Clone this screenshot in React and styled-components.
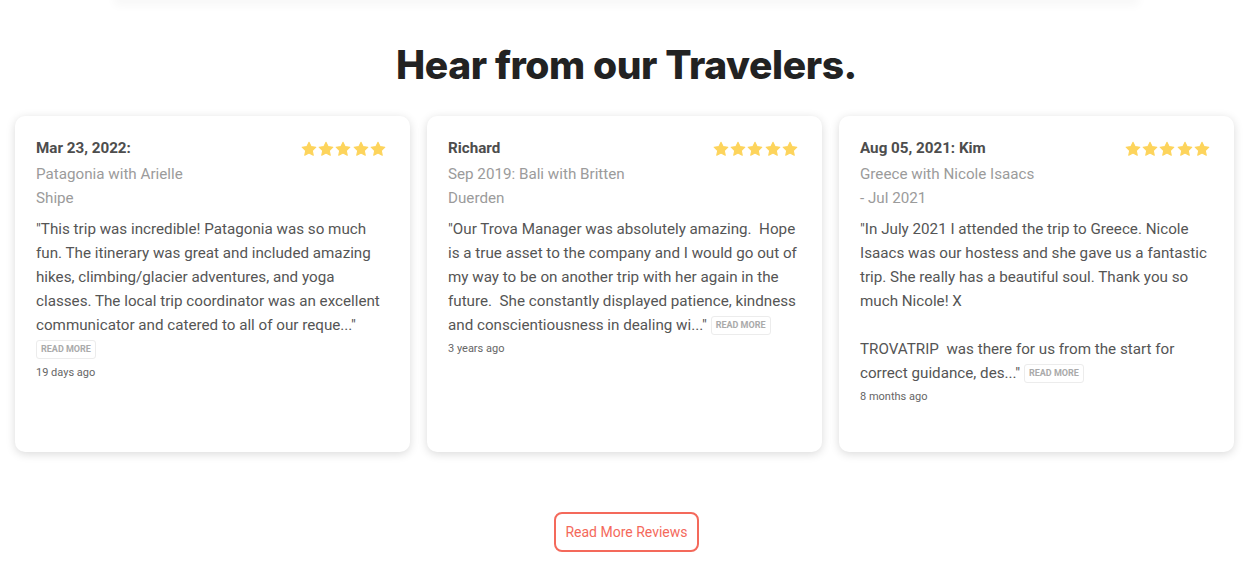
import styled, { createGlobalStyle } from "styled-components";

const GlobalStyle = createGlobalStyle`
  body {
    margin: 0;
    background: #fff;
    font-family: Roboto, "Liberation Sans", sans-serif;
  }
`;

const reviews = [
  {
    title: "Mar 23, 2022:",
    trip: "Patagonia with Arielle Shipe",
    text: "\"This trip was incredible! Patagonia was so much fun. The itinerary was great and included amazing hikes, climbing/glacier adventures, and yoga classes. The local trip coordinator was an excellent communicator and catered to all of our reque...\"",
    ago: "19 days ago",
  },
  {
    title: "Richard",
    trip: "Sep 2019: Bali with Britten Duerden",
    text: "\"Our Trova Manager was absolutely amazing.\u00a0 Hope is a true asset to the company and I would go out of my way to be on another trip with her again in the future.\u00a0 She constantly displayed patience, kindness and conscientiousness in dealing wi...\"",
    ago: "3 years ago",
  },
  {
    title: "Aug 05, 2021: Kim",
    trip: "Greece with Nicole Isaacs - Jul 2021",
    text: "\"In July 2021 I attended the trip to Greece. Nicole Isaacs was our hostess and she gave us a fantastic trip. She really has a beautiful soul. Thank you so much Nicole! X\n\nTROVATRIP\u00a0 was there for us from the start for correct guidance, des...\"",
    ago: "8 months ago",
  },
];

const Star = () => (
  <svg width="16" height="16" viewBox="0 0 24 24">
    <path
      d="M12 1.8l3.1 6.6 7.2.9-5.3 5 1.4 7.1L12 17.9l-6.4 3.5 1.4-7.1-5.3-5 7.2-.9z"
      fill="#fdd45c"
      stroke="#fdd45c"
      strokeWidth="1.6"
      strokeLinejoin="round"
    />
  </svg>
);

const App = () => (
  <>
    <GlobalStyle />
    <Section>
      <TopShade />
      <Heading>Hear from our Travelers.</Heading>
      <Grid>
        {reviews.map((r) => (
          <Card key={r.title}>
            <CardHead>
              <Who>
                <Name>{r.title}</Name>
                <Trip>{r.trip}</Trip>
              </Who>
              <Stars>
                {[0, 1, 2, 3, 4].map((i) => (
                  <Star key={i} />
                ))}
              </Stars>
            </CardHead>
            <Body>
              {r.text} <ReadMore>Read more</ReadMore>
            </Body>
            <Ago>{r.ago}</Ago>
          </Card>
        ))}
      </Grid>
      <Footer>
        <MoreButton>Read More Reviews</MoreButton>
      </Footer>
    </Section>
  </>
);

const Section = styled.section`
  min-height: 568px;
`;

const TopShade = styled.div`
  height: 2px;
  margin: -2px 120px 0;
  background: #f8f8f8;
  box-shadow: 0 0 10px 6px #f8f8f8;
`;

const Heading = styled.h2`
  margin: 40px 0 0;
  height: 50px;
  text-align: center;
  font-family: Inter, "Noto Sans", sans-serif;
  font-weight: 800;
  font-size: 39px;
  line-height: 50px;
  letter-spacing: -0.4px;
  color: #222;
`;

const Grid = styled.div`
  display: grid;
  grid-template-columns: repeat(3, 395px);
  gap: 17px;
  padding-left: 15px;
  margin-top: 26px;
`;

const Card = styled.article`
  box-sizing: border-box;
  height: 336px;
  padding: 20px 18px 20px 21px;
  background: #fff;
  border-radius: 10px;
  box-shadow: 0 2px 10px rgba(0, 0, 0, 0.15);
`;

const CardHead = styled.div`
  display: flex;
  justify-content: space-between;
  align-items: flex-start;
`;

const Who = styled.div`
  max-width: 180px;
`;

const Name = styled.div`
  font-size: 15.2px;
  line-height: 24px;
  font-weight: 700;
  color: #4d4d4d;
`;

const Trip = styled.div`
  margin-top: 2px;
  font-size: 15.2px;
  line-height: 24px;
  color: #9b9b9b;
`;

const Stars = styled.div`
  display: flex;
  gap: 1.3px;
  margin: 5px 6px 0 0;
`;

const Body = styled.p`
  margin: 7px 0 0;
  font-size: 15.2px;
  line-height: 24px;
  color: #555;
  white-space: pre-line;
`;

const ReadMore = styled.span`
  display: inline-block;
  padding: 2px 4px;
  font-size: 9px;
  line-height: 13px;
  font-weight: 700;
  text-transform: uppercase;
  color: #aaa;
  border: 1px solid #ececec;
  border-radius: 3px;
  vertical-align: middle;
`;

const Ago = styled.div`
  margin-top: 4px;
  font-size: 11px;
  line-height: 16px;
  color: #666;
`;

const Footer = styled.div`
  display: flex;
  justify-content: center;
  margin-top: 60px;
`;

const MoreButton = styled.button`
  width: 145px;
  height: 40px;
  background: #fff;
  border: 2px solid #f4695b;
  border-radius: 8px;
  color: #f4695b;
  font-family: Roboto, "Liberation Sans", sans-serif;
  font-size: 14px;
  cursor: pointer;
`;

export default App;
